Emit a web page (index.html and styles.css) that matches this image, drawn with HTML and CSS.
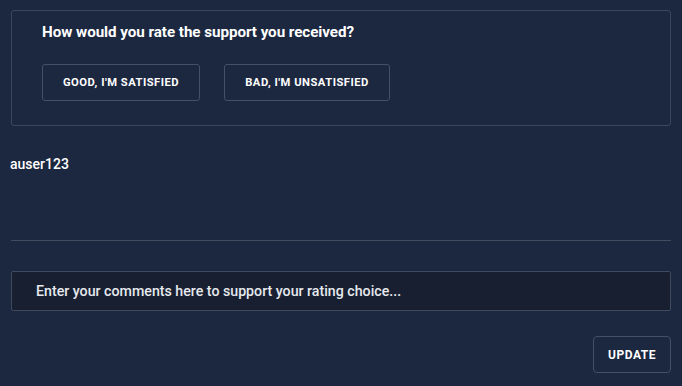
FILE: index.html
```html
<!DOCTYPE html>
<html lang="en">
<head>
<meta charset="utf-8">
<title>Support rating</title>
<link rel="stylesheet" href="styles.css">
</head>
<body>
<main class="page">
  <section class="rating-card">
    <h2 class="rating-title">How would you rate the support you received?</h2>
    <div class="rating-actions">
      <button class="btn btn-choice" type="button">GOOD, I'M SATISFIED</button>
      <button class="btn btn-choice btn-bad" type="button">BAD, I'M UNSATISFIED</button>
    </div>
  </section>
  <div class="username">auser123</div>
  <hr class="divider">
  <input class="comment-input" type="text" placeholder="Enter your comments here to support your rating choice...">
  <div class="footer">
    <button class="btn btn-update" type="button">UPDATE</button>
  </div>
</main>
</body>
</html>
```

FILE: styles.css
```css
* { box-sizing: border-box; }
html, body {
  margin: 0;
  padding: 0;
  background: #1c2740;
  color: #ffffff;
  font-family: Roboto, "Noto Sans", sans-serif;
}
.page {
  padding: 10px 11px 0 11px;
  display: flex;
  flex-direction: column;
}
.rating-card {
  border: 1px solid #3c475b;
  border-radius: 3px;
  padding: 11px 30px 25px 30px;
  height: 116px;
}
.rating-title {
  margin: 0;
  font-size: 15.2px;
  font-weight: 700;
  line-height: 20px;
  letter-spacing: -0.05px;
  color: #ffffff;
}
.rating-actions {
  display: flex;
  gap: 24px;
  margin-top: 22px;
}
.btn {
  background: transparent;
  border: 1px solid #445066;
  border-radius: 3px;
  color: #ffffff;
  font-family: Roboto, "Noto Sans", sans-serif;
  font-weight: 700;
  font-size: 11.2px;
  letter-spacing: 0.5px;
  height: 37px;
  padding: 0;
  cursor: pointer;
}
.btn-choice { width: 158px; }
.btn-bad { width: 166px; }
.username {
  margin: 29px 0 0 -1px;
  font-size: 14px;
  font-weight: 500;
  line-height: 18px;
  color: #ffffff;
}
.divider {
  margin: 67px 0 0 0;
  border: 0;
  border-top: 1px solid #414c5f;
  height: 0;
}
.comment-input {
  margin-top: 30px;
  height: 40px;
  width: 100%;
  background: #181f30;
  border: 1px solid #3f4a5e;
  border-radius: 2px;
  padding: 0 24px;
  font-family: Roboto, "Noto Sans", sans-serif;
  font-size: 14.2px;
  font-weight: 500;
  color: #ffffff;
  outline: none;
}
.comment-input::placeholder { color: #e6e9ee; opacity: 1; }
.footer {
  display: flex;
  justify-content: flex-end;
  margin-top: 25px;
}
.btn-update {
  width: 78px;
  border-radius: 4px;
  font-size: 12px;
}
```
